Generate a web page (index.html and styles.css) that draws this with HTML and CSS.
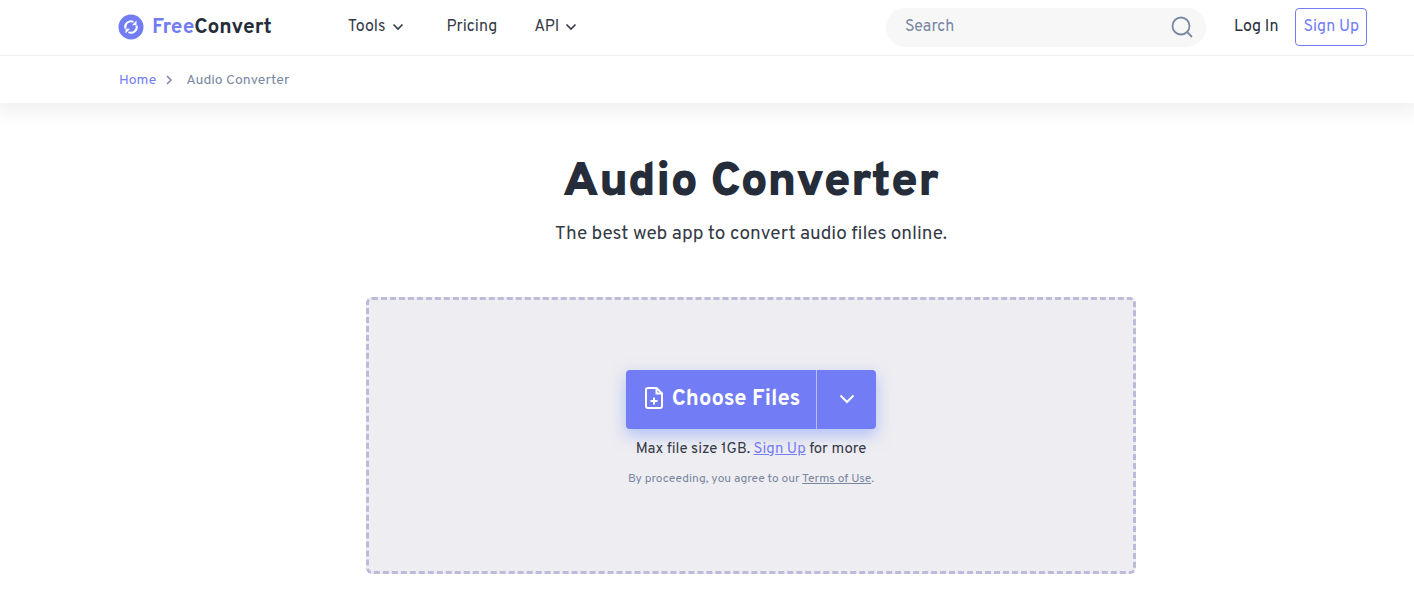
FILE: index.html
```
<!DOCTYPE html>
<html lang="en">
<head>
  <meta charset="UTF-8" />
  <meta name="viewport" content="width=device-width, initial-scale=1.0"/>
  <title>Audio Converter - FreeConvert</title>
  <link rel="stylesheet" href="styles.css">
</head>
<body>
  <header class="header">
    <a class="logo" href="#">
      <svg width="26" height="26" viewBox="0 0 26 26" fill="none">
        <circle cx="13" cy="13" r="12.5" fill="#727cf5"/>
        <path d="M7.4 14.500A5.800 5.800 0 0 1 15.500 7.800" stroke="#fff" stroke-width="2"/>
        <path d="M18.600 11.500A5.800 5.800 0 0 1 10.500 18.200" stroke="#fff" stroke-width="2"/>
        <path d="M18.500 6.600v4.600h-4.600z M7.500 19.400v-4.600h4.600z" fill="#fff"/>
      </svg>
      <span><span class="logo-free">Free</span>Convert</span>
    </a>
    <nav class="nav">
      <button class="nav-item" type="button">Tools
        <svg width="12" height="8" viewBox="0 0 12 8"><path d="M1.500 1.500L6 6l4.500-4.500"/></svg>
      </button>
      <a class="nav-item" href="#">Pricing</a>
      <button class="nav-item" type="button">API
        <svg width="12" height="8" viewBox="0 0 12 8"><path d="M1.500 1.500L6 6l4.500-4.500"/></svg>
      </button>
    </nav>
    <form class="search">
      <input type="search" placeholder="Search" aria-label="Search">
      <button type="submit" aria-label="Submit search">
        <svg width="22" height="22" viewBox="0 0 22 22"><circle cx="10" cy="10" r="8.500"/><path d="M16.200 16.200L21 21"/></svg>
      </button>
    </form>
    <a class="login" href="#">Log In</a>
    <a class="signup" href="#">Sign Up</a>
  </header>

  <nav class="breadcrumb" aria-label="Breadcrumb">
    <a href="#">Home</a>
    <svg width="8" height="10" viewBox="0 0 8 10"><path d="M2 1l4 4-4 4"/></svg>
    <span>Audio Converter</span>
  </nav>

  <main class="main">
    <h1>Audio Converter</h1>
    <p class="subtitle">The best web app to convert audio files online.</p>

    <section class="dropzone">
      <div class="choose">
        <button class="choose-files" type="button">
          <svg width="20" height="24" viewBox="0 0 20 24">
            <path d="M12.500 2H4a2 2 0 0 0-2 2v16a2 2 0 0 0 2 2h12a2 2 0 0 0 2-2V7.500z"/>
            <path d="M12.500 2v5.500H18M10 11.500v7M6.500 15h7"/>
          </svg>
          Choose Files
        </button>
        <button class="choose-more" type="button" aria-label="More sources">
          <svg width="16" height="10" viewBox="0 0 16 10"><path d="M1.500 1.500L8 8l6.500-6.500"/></svg>
        </button>
      </div>
      <p class="limit">Max file size 1GB. <a href="#">Sign Up</a> for more</p>
      <p class="terms">By proceeding, you agree to our <a href="#">Terms of Use</a>.</p>
    </section>
  </main>
</body>
</html>
```
FILE: styles.css
```
:root {
  --primary: #727cf5;
  --dark: #252d3b;
  --text: #343a46;
  --muted: #7987a1;
}

* {
  box-sizing: border-box;
}

body {
  margin: 0;
  font-family: Overpass, Roboto, sans-serif;
  font-size: 16px;
  color: var(--text);
  background: #fff;
  overflow-x: hidden;
}

a {
  color: var(--primary);
  text-decoration: none;
}

button {
  font: inherit;
  color: inherit;
  background: none;
  border: none;
  padding: 0;
  cursor: pointer;
}

svg {
  flex: none;
}

/* Header */
.header {
  display: flex;
  align-items: center;
  height: 56px;
  padding: 0 47px 1px 118px;
  border-bottom: 1px solid #eeeeef;
}

.logo {
  display: flex;
  align-items: center;
  gap: 8px;
  font-size: 21px;
  font-weight: 700;
  line-height: 30px;
  color: var(--dark);
}
.logo span { padding-top: 1px; }
.logo-free { color: var(--primary); }

.nav {
  display: flex;
  gap: 37px;
  margin-left: 76px;
}
.nav-item {
  display: flex;
  align-items: center;
  gap: 6px;
  line-height: 20px;
  color: var(--text);
}
.nav-item svg {
  margin-right: 6px;
  fill: none;
  stroke: var(--text);
  stroke-width: 1.6;
}

.search {
  display: flex;
  align-items: center;
  width: 320px;
  height: 39px;
  margin-left: auto;
  padding: 0 13px 0 19px;
  border-radius: 20px;
  background: #f7f7f8;
}
.search input {
  flex: 1;
  min-width: 0;
  padding: 0;
  border: none;
  outline: none;
  background: none;
  font: inherit;
  color: var(--text);
}
.search input::placeholder {
  color: var(--muted);
  opacity: 1;
}
.search button { display: flex; }
.search svg {
  fill: none;
  stroke: var(--muted);
  stroke-width: 1.8;
}

.login {
  margin-left: 28px;
  color: var(--dark);
}
.signup {
  margin-left: 17px;
  padding: 1px 7px 0;
  border: 1px solid var(--primary);
  border-radius: 4px;
  line-height: 35px;
}

/* Breadcrumb */
.breadcrumb {
  display: flex;
  align-items: center;
  height: 47px;
  padding: 1px 47px 0 119px;
  font-size: 14px;
  color: var(--muted);
  box-shadow: 0 6px 18px 4px rgba(0, 0, 0, 0.06);
  clip-path: inset(0 0 -30px 0);
}
.breadcrumb svg {
  margin: 0 13px 0 9px;
  fill: none;
  stroke: var(--muted);
  stroke-width: 1.5;
}

/* Converter */
.main {
  padding: 50px 31px 28px 119px;
  text-align: center;
}

h1 {
  margin: 0;
  font-size: 48px;
  font-weight: 900;
  line-height: 60px;
  color: var(--dark);
}

.subtitle {
  margin: 7px 0 0;
  font-size: 19px;
  line-height: 28px;
}

.dropzone {
  display: flex;
  flex-direction: column;
  align-items: center;
  max-width: 770px;
  margin: 49px auto 0;
  padding: 70px 20px 84px;
  border: 3px dashed #bdbbda;
  border-radius: 6px;
  background: #eeedf1;
}

.choose {
  display: flex;
  height: 59px;
  border-radius: 4px;
  color: #fff;
  background: var(--primary);
  box-shadow: 0 6px 16px rgba(114, 148, 255, 0.5);
}
.choose svg {
  fill: none;
  stroke: #fff;
  stroke-width: 2;
}
.choose-files {
  display: flex;
  align-items: center;
  gap: 8px;
  padding: 0 16px 0 18px;
  font-size: 22px;
  font-weight: 700;
}
.choose-files svg { margin-bottom: 3px; }
.choose-more {
  width: 60px;
  border-left: 1px solid #b9bdfa;
}

.limit {
  margin: 11px 0 0;
  font-size: 15px;
  line-height: 20px;
}
.terms {
  margin: 11px 0 0;
  font-size: 12px;
  line-height: 16px;
  color: var(--muted);
}
.limit a,
.terms a {
  text-decoration: underline;
}
.terms a { color: inherit; }
```
